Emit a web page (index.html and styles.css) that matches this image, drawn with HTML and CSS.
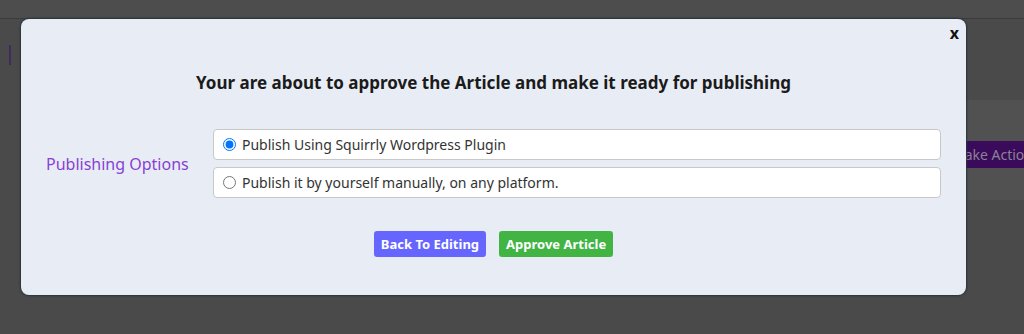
FILE: index.html
```html
<!DOCTYPE html>
<html>
<head>
	<meta charset="utf-8">
	<title>Approve Article</title>
	<link rel="stylesheet" href="styles.css">
</head>
<body>
	<div class="topbar"></div>
	<div class="page">
		<div class="page-mark"></div>
		<div class="page-panel">
			<span class="page-btn">Take Action</span>
		</div>
	</div>
	<div class="modal">
		<button class="close">x</button>
		<h3 class="title">Your are about to approve the Article and make it ready for publishing</h3>
		<div class="row">
			<div class="label">Publishing Options</div>
			<div class="options">
				<label class="option"><input type="radio" name="publish" checked> Publish Using Squirrly Wordpress Plugin</label>
				<label class="option"><input type="radio" name="publish"> Publish it by yourself manually, on any platform.</label>
			</div>
		</div>
		<div class="actions">
			<button class="btn btn-blue">Back To Editing</button>
			<button class="btn btn-green">Approve Article</button>
		</div>
	</div>
</body>
</html>
```

FILE: styles.css
```css
body{
	margin: 0;
	height: 334px;
	overflow: hidden;
	background-color: #4a4a4a;
	font-family: "Noto Sans", "Open Sans", sans-serif;
}
.topbar{
	height: 18px;
	background-color: #4d4d4d;
	border-bottom: 1px solid #3b3b3b;
}
.page{
	position: relative;
	height: 315px;
}
.page-mark{
	position: absolute;
	left: 9px;
	top: 26px;
	width: 2px;
	height: 20px;
	background-color: #3d2c5c;
}
.page-panel{
	position: absolute;
	left: 900px;
	right: 0;
	top: 81px;
	height: 100px;
	background-color: #515151;
}
.page-btn{
	position: absolute;
	left: 58px;
	top: 41px;
	width: 110px;
	height: 27px;
	line-height: 27px;
	background-color: #3a0b5a;
	color: #8a8196;
	font-size: 14px;
}
.modal{
	position: absolute;
	left: 21px;
	top: 19px;
	width: 945px;
	height: 276px;
	box-sizing: border-box;
	padding: 52px 25px 0;
	background-color: #e8edf5;
	border-radius: 8px;
	box-shadow: 0 0 2px 1px #26363c;
}
.close{
	position: absolute;
	top: 5px;
	right: 7px;
	padding: 0;
	border: none;
	background: none;
	font-family: inherit;
	font-size: 16px;
	font-weight: 700;
	color: #111;
	line-height: 18px;
	cursor: pointer;
}
.title{
	margin: 0;
	font-size: 17px;
	line-height: 24px;
	font-weight: 700;
	text-align: center;
	color: #1b1b1b;
}
.row{
	display: grid;
	grid-template-columns: 167px 1fr;
	align-items: center;
	margin-top: 34px;
}
.label{
	font-size: 16px;
	color: #8a3fd3;
}
.options{
	display: flex;
	flex-direction: column;
	gap: 7px;
}
.option{
	display: flex;
	align-items: center;
	height: 31px;
	box-sizing: border-box;
	padding: 0 9px;
	background-color: #fff;
	border: 1px solid #c8c8c8;
	border-radius: 4px;
	font-size: 14px;
	color: #333;
}
.option input{
	width: 13px;
	height: 13px;
	margin: 0 6px 0 0;
}
.actions{
	display: flex;
	justify-content: center;
	gap: 13px;
	margin-top: 33px;
}
.btn{
	height: 26px;
	padding: 0 7px;
	border: none;
	border-radius: 3px;
	font-family: inherit;
	font-size: 13px;
	font-weight: 700;
	color: #fff;
	cursor: pointer;
}
.btn-blue{
	background-color: #6666ff;
}
.btn-green{
	background-color: #41b444;
}
```
